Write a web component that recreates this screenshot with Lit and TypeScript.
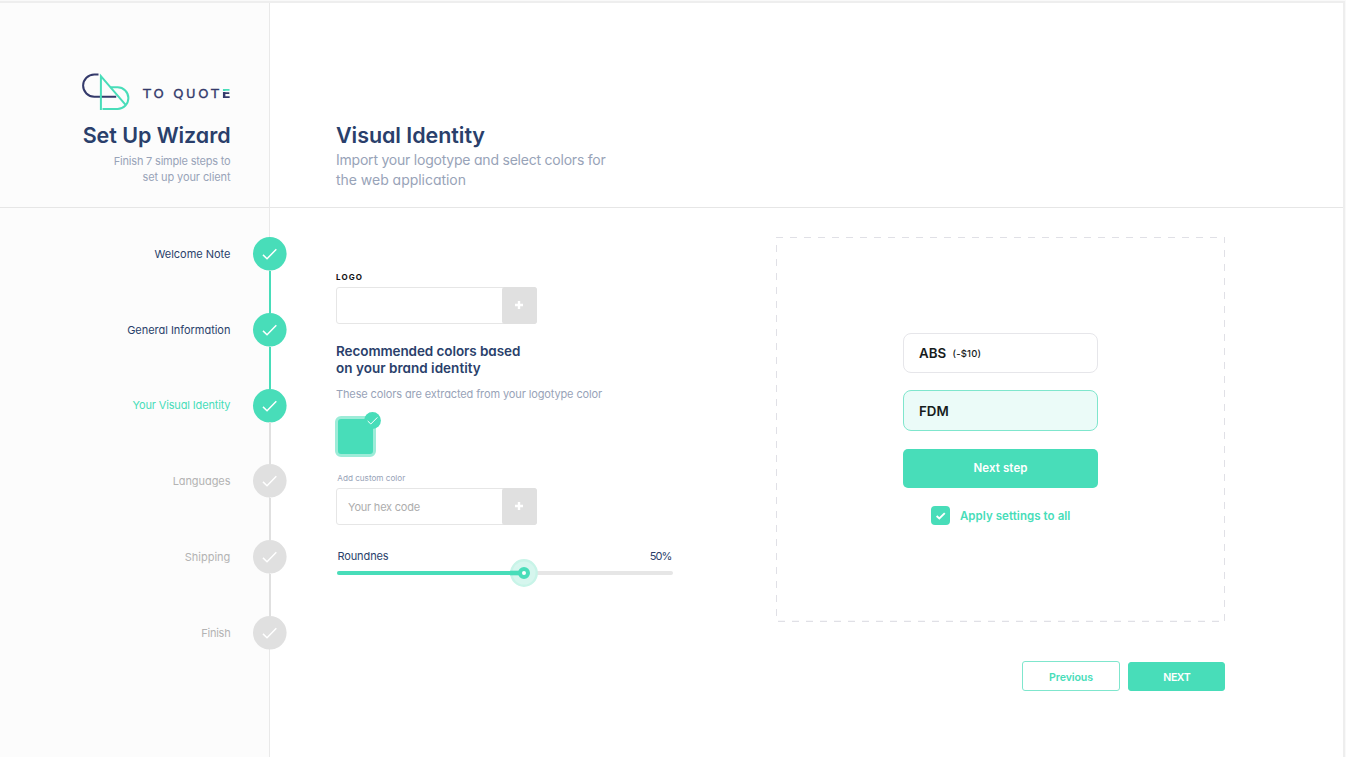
import { LitElement, html, css } from "lit";
import { customElement, property } from "lit/decorators.js";
import { classMap } from "lit/directives/class-map.js";
import { styleMap } from "lit/directives/style-map.js";

type StepState = "done" | "current" | "todo";

interface Step {
  label: string;
  state: StepState;
  tracking: number;
}

const STEPS: Step[] = [
  { label: "Welcome Note", state: "done", tracking: -0.03 },
  { label: "General Information", state: "done", tracking: -0.03 },
  { label: "Your Visual Identity", state: "current", tracking: -0.15 },
  { label: "Languages", state: "todo", tracking: -0.07 },
  { label: "Shipping", state: "todo", tracking: 0.02 },
  { label: "Finish", state: "todo", tracking: -0.25 },
];

@customElement("brand-logo")
export class BrandLogo extends LitElement {
  static styles = css`
    :host {
      display: flex;
      align-items: flex-start;
      justify-content: flex-end;
      height: 37px;
    }
    .mark {
      flex: none;
      width: 48px;
      height: 37px;
    }
    .word {
      margin: 11px -0.9px 0 12.5px;
      width: 88.5px;
      font-family: "DejaVu Sans", sans-serif;
      font-size: 13px;
      line-height: 19px;
      letter-spacing: 2.65px;
      text-align: left;
      white-space: nowrap;
      color: #343a6b;
      -webkit-text-stroke: 0.3px #343a6b;
    }
    .tail {
      letter-spacing: 0;
      font-weight: 700;
      color: transparent;
      -webkit-text-stroke: 0;
      background: linear-gradient(#48ddb9 0 4.8px, #fcfcfc 4.8px 6.2px, #343a6b 6.2px);
      -webkit-background-clip: text;
      background-clip: text;
    }
  `;
  render() {
    return html`
      <svg class="mark" viewBox="0 0 48 37" fill="none" stroke-width="2">
        <path d="M16.5 1.4H12.3A11.2 11.2 0 0 0 12.3 23.8H34.2" stroke="#343a6b" />
        <path d="M18.9 37V3.2L43.4 31.6" stroke="#48ddb9" />
        <path d="M28.4 14.3H35.6A10.7 10.7 0 0 1 35.6 35.9H20.5" stroke="#48ddb9" />
      </svg>
      <div class="word">TO QUOT<span class="tail">E</span></div>
    `;
  }
}

@customElement("step-list")
export class StepList extends LitElement {
  @property({ attribute: false }) steps: Step[] = [];
  static styles = css`
    :host {
      display: flex;
      flex-direction: column;
    }
    .step {
      display: flex;
      align-items: center;
      justify-content: flex-end;
      gap: 22.4px;
      height: 33.6px;
      font-size: 11px;
      line-height: 16px;
      white-space: nowrap;
      color: #2a3f6b;
    }
    .step.current {
      color: #48ddb9;
    }
    .step.todo {
      color: #b3b3b3;
    }
    .dot {
      flex: none;
      width: 33.6px;
      height: 33.6px;
      overflow: visible;
    }
    .disc {
      fill: #48ddb9;
    }
    .todo .disc {
      fill: #e0e0e0;
    }
    .link {
      align-self: flex-end;
      width: 2px;
      height: 42.1px;
      margin-right: 15.4px;
      background: #48ddb9;
    }
    .link.idle {
      background: #e0e0e0;
    }
  `;
  render() {
    return this.steps.map(
      (s, i) => html`
        ${i
          ? html`<div class=${classMap({ link: true, idle: s.state === "todo" })}></div>`
          : ""}
        <div class="step ${s.state}">
          <span style=${styleMap({ letterSpacing: `${s.tracking}px` })}>${s.label}</span>
          <svg class="dot" viewBox="0 0 34 34" fill="none" stroke-width="1.5">
            <circle class="disc" cx="17" cy="17" r="17" />
            <path d="M10.1 18.1L14.2 22L23.6 12.4" stroke="#fff" />
          </svg>
        </div>
      `
    );
  }
}

@customElement("add-field")
export class AddField extends LitElement {
  @property() placeholder = "";
  static styles = css`
    :host {
      display: flex;
      box-sizing: border-box;
      width: 201px;
      height: 37px;
      border: 1px solid #e6e6e6;
      border-radius: 3px;
      background: #fff;
    }
    .text {
      flex: 1;
      padding-left: 11px;
      font-size: 11px;
      line-height: 36px;
      letter-spacing: -0.22px;
      color: #adadad;
    }
    .add {
      display: flex;
      align-items: center;
      justify-content: center;
      box-sizing: border-box;
      width: 35px;
      margin: -1px;
      padding: 0 2px 1px 0;
      border-radius: 3px;
      background: #e0e0e0;
    }
  `;
  render() {
    return html`
      <div class="text">${this.placeholder}</div>
      <div class="add">
        <svg width="8" height="8" viewBox="0 0 8 8" stroke="#fff" stroke-width="2.4">
          <path d="M4 0V8M0 4H8" />
        </svg>
      </div>
    `;
  }
}

@customElement("round-slider")
export class RoundSlider extends LitElement {
  @property({ type: Number }) fill = 0;
  static styles = css`
    :host {
      display: block;
      width: 336px;
      height: 4.6px;
      border-radius: 3px;
      background: #e6e6e6;
    }
    .bar {
      display: flex;
      align-items: center;
      justify-content: flex-end;
      height: 100%;
      border-radius: 3px;
      background: #48ddb9;
    }
    .knob {
      flex: none;
      width: 28px;
      height: 28px;
      margin-right: -14px;
    }
  `;
  render() {
    return html`
      <div class="bar" style=${styleMap({ width: `${this.fill}%` })}>
        <svg class="knob" viewBox="0 0 28 28">
          <circle cx="14" cy="14" r="12.7" fill="#d6f6ee" stroke="#c8f4e8" stroke-width="2.4" />
          <path d="M0 11.7H10V16.3H0Z" fill="#48ddb9" />
          <circle cx="14" cy="14" r="4" fill="#fff" stroke="#48ddb9" stroke-width="4" />
        </svg>
      </div>
    `;
  }
}

@customElement("config-preview")
export class ConfigPreview extends LitElement {
  static styles = css`
    :host {
      display: grid;
      box-sizing: border-box;
      width: 449px;
      height: 384px;
      font-feature-settings: normal;
    }
    .outline,
    .stack {
      grid-area: 1 / 1;
    }
    .outline {
      width: 450px;
      height: 385px;
    }
    .stack {
      display: flex;
      flex-direction: column;
      width: 195px;
      padding: 96px 0 0 127px;
    }
    .option {
      display: flex;
      align-items: center;
      box-sizing: border-box;
      height: 40px;
      padding-left: 15px;
      border: 1px solid #e6e6ea;
      border-radius: 8px;
      font-size: 13.3px;
      font-weight: 600;
      color: #171c1c;
    }
    .option small {
      margin-left: 6.5px;
      font-size: 9.5px;
      font-weight: 500;
      letter-spacing: 0.15px;
    }
    .option.picked {
      height: 41px;
      margin-top: 17.4px;
      border-color: #7fe6cd;
      background: #ebfbf8;
    }
    .cta {
      height: 39px;
      margin-top: 17.6px;
      border-radius: 5px;
      background: #48ddb9;
      font-size: 11.5px;
      line-height: 38.5px;
      font-weight: 600;
      letter-spacing: 0.1px;
      text-align: center;
      color: #fff;
    }
    .apply {
      display: flex;
      align-items: center;
      gap: 9.5px;
      margin: 18px 0 0 28px;
      font-size: 11.5px;
      font-weight: 600;
      letter-spacing: 0.06px;
      white-space: nowrap;
      color: #48ddb9;
    }
    .box {
      flex: none;
      width: 19.4px;
      height: 19.4px;
      border-radius: 4px;
      background: #48ddb9;
    }
  `;
  render() {
    return html`
      <svg class="outline" viewBox="0 0 450 385" fill="none" stroke="#e0e0e6" stroke-dasharray="7 7">
        <path d="M0 .5H449" />
        <path d="M.5 8V384" />
        <path d="M448.5 0V384" stroke-dashoffset="1" />
        <path d="M2 384.3H444" stroke-width="1.3" />
      </svg>
      <div class="stack">
        <div class="option">ABS <small>(-$10)</small></div>
        <div class="option picked">FDM</div>
        <div class="cta">Next step</div>
        <div class="apply">
          <svg class="box" viewBox="0 0 20 20" fill="none" stroke="#fff" stroke-width="2">
            <path d="M5.8 10.3L8.6 12.8L14.2 7.3" />
          </svg>
          Apply settings to all
        </div>
      </div>
    `;
  }
}

@customElement("app-root")
export class AppRoot extends LitElement {
  static styles = css`
    :host {
      display: block;
      box-sizing: border-box;
      height: 757px;
      padding: 1px 1px 0 0;
      overflow: hidden;
      background: #f9f9f9;
      font-family: Inter, "Liberation Sans", sans-serif;
      font-feature-settings: "cv11";
      color: #2a3f6b;
    }
    .frame {
      display: grid;
      grid-template: 205px 1fr / 270px 1fr;
      box-sizing: border-box;
      height: 756px;
      border-top: 2px solid #eee;
      border-right: 2px solid #eee;
      background: #fff;
    }
    .side {
      box-sizing: border-box;
      border-right: 1px solid #e9e9e9;
      background: #fcfcfc;
    }
    .brand {
      padding: 70px 38.5px 0 0;
      border-bottom: 1px solid #e6e6e6;
      text-align: right;
    }
    .intro {
      box-sizing: border-box;
      padding: 117.5px 0 0 66px;
      border-bottom: 1px solid #e6e6e6;
    }
    .title {
      margin: 0;
      font-size: 21.5px;
      line-height: 28px;
      font-weight: 600;
      letter-spacing: -0.06px;
    }
    .brand .title {
      margin-top: 10.5px;
    }
    .hint {
      font-size: 11px;
      line-height: 16px;
      letter-spacing: -0.2px;
      color: #98a3b8;
    }
    .brand .hint {
      margin-top: 4px;
    }
    .hint .second {
      letter-spacing: -0.09px;
    }
    .lead {
      margin-top: 1px;
      font-size: 14px;
      line-height: 20px;
      letter-spacing: -0.22px;
      color: #98a3b8;
    }
    .lead .second {
      letter-spacing: -0.03px;
    }
    .steps {
      padding-top: 29.3px;
    }
    .steps step-list {
      margin-right: -17.4px;
    }
    .content {
      display: grid;
      grid-template-columns: 440px 449px;
      padding-left: 66px;
    }
    .form {
      padding-top: 64px;
    }
    .caption {
      margin-bottom: 5px;
      font-size: 8px;
      line-height: 10px;
      font-weight: 700;
      letter-spacing: 1.1px;
      color: #111;
    }
    .subtitle {
      margin: 19px 0 0;
      font-size: 13.5px;
      line-height: 17px;
      font-weight: 600;
      letter-spacing: -0.08px;
    }
    .subtitle .second {
      letter-spacing: 0.02px;
    }
    .note {
      margin-top: 9px;
      font-size: 11px;
      line-height: 16px;
      letter-spacing: -0.12px;
      color: #98a3b8;
    }
    .swatch {
      display: flex;
      justify-content: flex-end;
      box-sizing: border-box;
      width: 41px;
      height: 41px;
      margin: 14px 0 0 -1.4px;
      border: 3px solid #9decd8;
      border-radius: 6px;
      background: #48ddb9;
    }
    .tick {
      flex: none;
      width: 17px;
      height: 17px;
      margin: -7px -8.5px 0 0;
    }
    .custom {
      margin: 15px 0 4px 1.3px;
      font-size: 8.2px;
      line-height: 12px;
      letter-spacing: -0.03px;
      color: #98a3b8;
    }
    .range {
      display: flex;
      justify-content: space-between;
      width: 334px;
      margin: 23px 0 6.8px 1.4px;
      font-size: 11px;
      line-height: 16px;
      letter-spacing: -0.1px;
    }
    .range .value {
      letter-spacing: -0.9px;
    }
    .form round-slider {
      margin-left: 1px;
    }
    .result {
      padding-top: 29px;
    }
    .actions {
      display: flex;
      justify-content: flex-end;
      gap: 8px;
      margin-top: 40px;
    }
    .btn {
      box-sizing: border-box;
      width: 98px;
      height: 30px;
      padding-left: 1px;
      border: 1px solid #7fe6cd;
      border-radius: 3px;
      font-size: 10.6px;
      line-height: 31px;
      font-weight: 600;
      letter-spacing: -0.08px;
      text-align: center;
      color: #48ddb9;
    }
    .btn.main {
      width: 97.5px;
      height: 29px;
      margin-top: 0.5px;
      border-color: #48ddb9;
      background: #48ddb9;
      line-height: 30px;
      letter-spacing: -0.45px;
      color: #fff;
    }
  `;
  render() {
    return html`
      <div class="frame">
        <header class="side brand">
          <brand-logo></brand-logo>
          <h1 class="title">Set Up Wizard</h1>
          <div class="hint">
            Finish 7 simple steps to<br /><span class="second">set up your client</span>
          </div>
        </header>
        <header class="intro">
          <h2 class="title">Visual Identity</h2>
          <div class="lead">
            Import your logotype and select colors for<br /><span class="second">the web application</span>
          </div>
        </header>
        <nav class="side steps"><step-list .steps=${STEPS}></step-list></nav>
        <main class="content">
          <section class="form">
            <div class="caption">LOGO</div>
            <add-field></add-field>
            <h3 class="subtitle">
              Recommended colors based<br /><span class="second">on your brand identity</span>
            </h3>
            <div class="note">These colors are extracted from your logotype color</div>
            <div class="swatch">
              <svg class="tick" viewBox="0 0 17 17" fill="none">
                <circle cx="8.5" cy="8.5" r="8.4" fill="#48ddb9" />
                <path d="M3.7 9L6.8 12L13.4 5.4" stroke="#fff" />
              </svg>
            </div>
            <div class="custom">Add custom color</div>
            <add-field placeholder="Your hex code"></add-field>
            <div class="range"><span>Roundnes</span><span class="value">50%</span></div>
            <round-slider fill="55.6"></round-slider>
          </section>
          <section class="result">
            <config-preview></config-preview>
            <div class="actions">
              <div class="btn">Previous</div>
              <div class="btn main">NEXT</div>
            </div>
          </section>
        </main>
      </div>
    `;
  }
}
